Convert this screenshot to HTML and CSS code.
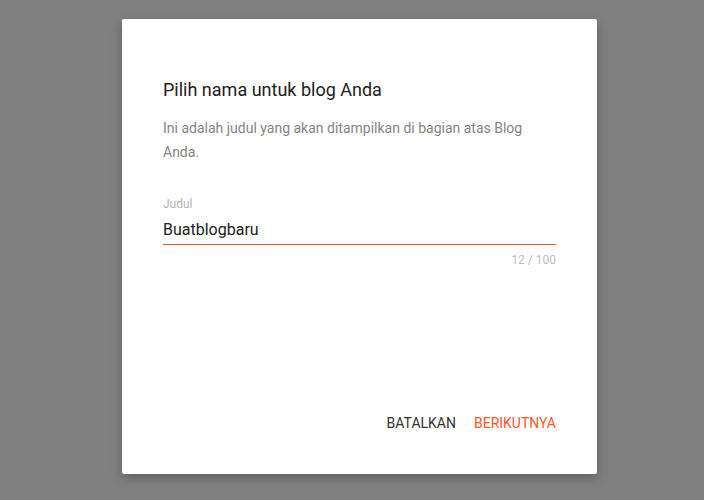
FILE: index.html
```html
<!DOCTYPE html>
<html lang="id">
<head>
    <meta charset="UTF-8">
    <meta name="viewport" content="width=device-width, initial-scale=1.0">
    <title>Blog baru</title>
    <link rel="stylesheet" href="styles.css">
</head>
<body>
    <div class="overlay">
        <div class="dialog">
            <h2 class="dialog-title">Pilih nama untuk blog Anda</h2>
            <p class="dialog-text">Ini adalah judul yang akan ditampilkan di bagian atas Blog Anda.</p>

            <div class="field">
                <label class="field-label" for="judul">Judul</label>
                <input id="judul" class="field-input" type="text" value="Buatblogbaru">
                <div class="field-line"></div>
                <div class="field-count">12 / 100</div>
            </div>

            <div class="dialog-actions">
                <button class="btn">Batalkan</button>
                <button class="btn btn-primary">Berikutnya</button>
            </div>
        </div>
    </div>
</body>
</html>
```

FILE: styles.css
```css
body {
    margin: 0;
    font-family: Roboto, Arial, sans-serif;
    background-color: #808080;
}

.overlay {
    height: 500px;
    padding: 19px 0 0 122px;
    box-sizing: border-box;
}

.dialog {
    width: 475px;
    height: 455px;
    box-sizing: border-box;
    padding: 59px 41px 0;
    background-color: #fff;
    border-radius: 2px;
    box-shadow: 0 4px 12px rgba(0, 0, 0, 0.25);
    display: flex;
    flex-direction: column;
}

.dialog-title {
    margin: 0;
    font-size: 18px;
    line-height: 24px;
    font-weight: 400;
    color: #212121;
}

.dialog-text {
    margin: 14px 0 0;
    font-size: 14px;
    line-height: 24px;
    color: #858585;
}

.field {
    margin-top: 32px;
    display: flex;
    flex-direction: column;
}

.field-label {
    font-size: 12px;
    line-height: 16px;
    color: #b5b5b5;
}

.field-input {
    margin-top: 7px;
    padding: 0 0 3px;
    border: none;
    outline: none;
    font-family: Roboto, Arial, sans-serif;
    font-size: 16px;
    line-height: 22px;
    color: #212121;
    background: transparent;
}

.field-line {
    height: 1px;
    background-color: #e8542a;
}

.field-count {
    margin-top: 7px;
    text-align: right;
    font-size: 12px;
    line-height: 16px;
    color: #bdbdbd;
}

.dialog-actions {
    margin-top: auto;
    margin-bottom: 41px;
    display: flex;
    justify-content: flex-end;
    gap: 18px;
}

.btn {
    padding: 0;
    border: none;
    background: none;
    font-family: Roboto, Arial, sans-serif;
    font-size: 14px;
    line-height: 20px;
    font-weight: 400;
    text-transform: uppercase;
    color: #333;
    cursor: pointer;
}

.btn-primary {
    color: #ff5722;
}
```
